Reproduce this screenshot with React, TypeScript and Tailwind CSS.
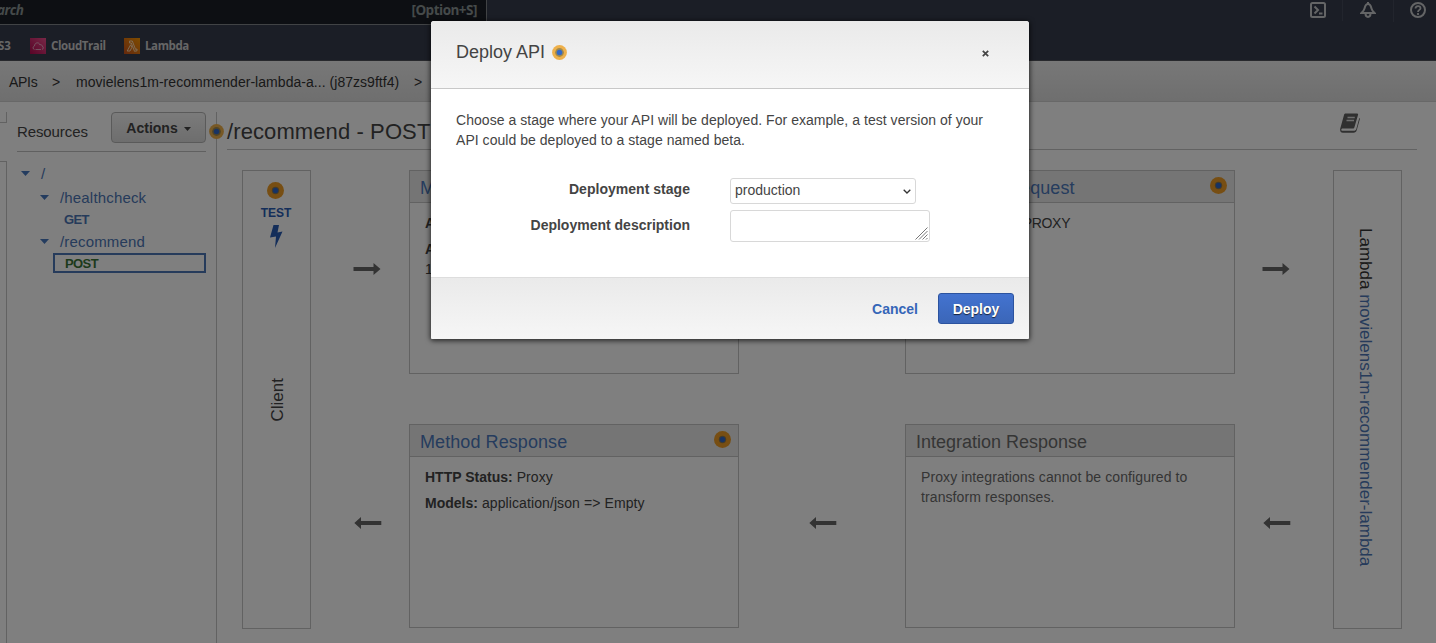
import type { ReactNode } from "react";

function Dot({ className = "" }: { className?: string }) {
  return (
    <svg className={className} width="17" height="17" viewBox="0 0 17 17">
      <circle cx="8.5" cy="8.5" r="8.5" fill="#ee9d26" />
      <circle cx="8.5" cy="8.5" r="3.7" fill="#8c7850" />
      <circle cx="8.5" cy="8.5" r="2.7" fill="#2f66c8" />
    </svg>
  );
}

function SoftDot({ className = "" }: { className?: string }) {
  return (
    <svg className={className} width="15" height="15" viewBox="0 0 15 15">
      <circle cx="7.5" cy="7.5" r="7.4" fill="#eeb04a" />
      <circle cx="7.5" cy="7.5" r="4.4" fill="#a0894f" />
      <circle cx="7.5" cy="7.5" r="2.8" fill="#3369c6" />
    </svg>
  );
}

function Arrow({ left = false, className = "" }: { left?: boolean; className?: string }) {
  return (
    <svg className={`shrink-0 ${className}`} width="28" height="12" viewBox="0 0 28 12">
      <path
        d={left ? "M7 0V4H27.3V8H7V12L0.3 6Z" : "M20.5 0V4H0.5V8H20.5V12L27.5 6Z"}
        fill="#666"
      />
    </svg>
  );
}

function Caret({ className = "" }: { className?: string }) {
  return (
    <svg className={`shrink-0 ${className}`} width="9" height="5" viewBox="0 0 9 5">
      <path d="M0 0H9L4.5 5Z" fill="#4878be" />
    </svg>
  );
}

function Card({
  title,
  link = true,
  dot = true,
  children,
}: {
  title: string;
  link?: boolean;
  dot?: boolean;
  children: ReactNode;
}) {
  return (
    <div className="h-[204px] w-[330px] border border-[#c4c4c4]">
      <div className="flex h-8 items-center justify-between border-b border-[#c4c4c4] bg-[#ebebeb] pr-[7px] pl-2.5">
        <span
          className={`pt-[4px] text-[18px] whitespace-nowrap ${link ? "tracking-[0.08px] text-[#4c79bc]" : "tracking-normal text-[#6a6a6a]"}`}
        >
          {title}
        </span>
        {dot && <Dot className="mb-[3px]" />}
      </div>
      <div className="px-[15px] pt-[10px] text-[14px] leading-5 tracking-[0.1px] text-[#444]">{children}</div>
    </div>
  );
}

function TopBar() {
  return (
    <header className="flex h-[61px] shrink-0 flex-col border-b border-[#50525a] bg-[#363c4c] font-['Open_Sans',sans-serif]">
      <div className="flex h-[25px] shrink-0 justify-between">
        <div className="flex w-[487px] justify-between border-r border-b border-[#82868a] bg-[#1a1f27] pr-[9px] text-[13.500px] leading-[20px] font-bold text-[#8b9494]">
          <span className="-ml-[3px] tracking-[-0.500px] italic">arch</span>
          <span className="tracking-[-0.500px]">[Option+S]</span>
        </div>
        <div className="flex items-start pr-[10px]">
          <svg className="mt-[2px]" width="16" height="16" viewBox="0 0 16 16" fill="none" stroke="#c8cacc" strokeWidth="2">
            <rect x="1" y="1" width="14" height="14" rx="1.5" />
            <path d="M4.5 4.5L8 8L4.5 11.5M9 11.5H12.5" />
          </svg>
          <div className="ml-4 h-[21px] w-px bg-[#454b5b]" />
          <svg className="mt-[2px] ml-[17px]" width="16" height="16" viewBox="0 0 16 16" fill="none" stroke="#c8cacc" strokeWidth="2">
            <path d="M8 0V2M8 2C5.500 2 5 4.500 4.500 6.500C4 8.500 3 9.500 1.500 11H14.500C13 9.500 12 8.500 11.500 6.500C11 4.500 10.500 2 8 2ZM5.500 11.500C5.500 16 10.500 16 10.500 11.500" />
          </svg>
          <div className="ml-[17px] h-[22px] w-px bg-[#454b5b]" />
          <svg className="mt-[2px] ml-4" width="16" height="16" viewBox="0 0 16 16" fill="none" stroke="#c8cacc" strokeWidth="2">
            <circle cx="8" cy="8" r="7" />
            <path d="M5.500 6.500C5.500 3.300 10.500 3.300 10.500 6.200C10.500 8 8 7.800 8 10M8 11V13" strokeWidth="1.800" />
          </svg>
        </div>
      </div>
      <div className="flex h-[35px] items-center pt-[6px] text-[11.500px] font-bold text-[#cdcdcd]">
        <span className="-ml-[2px] w-[32px]">S3</span>
        <svg width="16" height="16" viewBox="0 0 16 16">
          <defs>
            <linearGradient id="trail" x1="0" y1="1" x2="1" y2="0">
              <stop offset="0" stopColor="#b0084d" />
              <stop offset="1" stopColor="#f0508f" />
            </linearGradient>
          </defs>
          <rect width="16" height="16" fill="url(#trail)" />
          <path d="M4.500 11.500C2.600 11.300 2.600 8.400 4.500 8C4.500 4.500 9 3.500 10 7C11 6 12 7 12 8C13.800 8.500 13.600 11.300 12 11.500M5.500 11.500H11" fill="none" stroke="#f0c4d4" strokeWidth="0.800" />
        </svg>
        <span className="ml-[5px] w-[73px] tracking-[-0.400px]">CloudTrail</span>
        <svg width="16" height="16" viewBox="0 0 16 16">
          <defs>
            <linearGradient id="lambda" x1="0" y1="1" x2="1" y2="0">
              <stop offset="0" stopColor="#c8511b" />
              <stop offset="1" stopColor="#f90" />
            </linearGradient>
          </defs>
          <rect width="16" height="16" fill="url(#lambda)" />
          <path d="M5.500 3H8.300L11.500 11.300L13 11V12.800L10.500 13.300L7.300 5H5.500ZM6.600 6.800L7.900 9.300L6 13H3.200Z" fill="none" stroke="#ffe3bd" strokeWidth="0.900" />
        </svg>
        <span className="ml-[5px] tracking-[-0.400px]">Lambda</span>
      </div>
    </header>
  );
}

function Sidebar() {
  return (
    <aside className="flex h-full w-[217px] shrink-0">
      <div className="flex w-[7px] shrink-0 flex-col">
        <div className="mt-[10px] h-[11px] border-r border-b border-[#c4c4c4]" />
        <div className="mt-[38px] flex-1 border-t border-r border-[#c4c4c4]" />
      </div>
      <div className="mt-[10px] flex-1 border-r border-[#c4c4c4] pr-2.5 pl-2.5">
        <div className="flex h-10 justify-between border-b border-[#c0c0c0]">
          <span className="pt-[9px] text-[15px] leading-[22px] tracking-[-0.1px] text-[#444]">Resources</span>
          <button className="flex h-[31px] w-[95px] items-center justify-center gap-[6px] rounded-[4px] border border-[#b4b4b4] bg-gradient-to-b from-[#f6f6f6] to-[#dcdcdc] pt-[2px] text-[14px] font-bold text-[#444]">
            Actions
            <svg width="7" height="4" viewBox="0 0 7 4">
              <path d="M0 0H7L3.500 4Z" fill="#444" />
            </svg>
          </button>
        </div>
        <div className="pt-[11px] text-[15px] leading-[22px] tracking-[0.17px] text-[#4c76b6]">
          <div className="flex h-[22px] items-center pb-px pl-1">
            <Caret />
            <span className="ml-[11px]">/</span>
          </div>
          <div className="mt-[2px] flex h-[22px] items-center pl-[23px]">
            <Caret className="mb-[2px]" />
            <span className="ml-[11px]">/healthcheck</span>
          </div>
          <div className="h-[22px] pl-[47px] text-[13px] font-bold tracking-[-0.600px]">GET</div>
          <div className="flex h-[22px] items-center pl-[23px]">
            <Caret className="mb-[2px]" />
            <span className="ml-[11px]">/recommend</span>
          </div>
          <div className="ml-9 h-5 w-[153px] border-2 border-[#4c76b6] pl-[10px] text-[13px] leading-[17px] font-bold tracking-[-0.6px] text-[#3a7438]">
            POST
          </div>
        </div>
      </div>
    </aside>
  );
}

function MethodView() {
  return (
    <main className="flex-1 pt-[10px] pl-2.5">
      <div className="flex h-[38px] w-[1190px] items-start justify-between border-b border-[#c4c4c4] pr-[57px]">
        <h1 className="pt-[6px] text-[22px] leading-7 tracking-[0.1px] whitespace-nowrap text-[#444]">/recommend - POST</h1>
        <svg className="mt-[1px]" width="20" height="20" viewBox="0 0 20 20">
          <path d="M5.500 0.500H17C18 0.500 18.300 1 18 2L14.500 14C14.200 15 13.800 15.500 12.800 15.500H2.500C1 15.500 0.800 17.800 2.500 17.800H13.500C15.200 17.800 16 17 16.300 16L19.300 5C19.800 5 20 5.500 19.800 6.200L16.800 17C16.300 18.800 15.200 19.800 13.500 19.800H2.800C0.800 19.800 -0.200 18 0.200 15.800L4 2C4.300 1 4.700 0.500 5.500 0.500Z" fill="#606060" />
          <path d="M7.500 4.500H14.800M6.500 7.500H14" stroke="#ddd" strokeWidth="1.300" />
        </svg>
      </div>
      <div className="mt-5 ml-[15px] flex h-[459px]">
        <div className="flex w-[69px] flex-col items-center border border-[#c4c4c4] pt-[11px] pr-[2px]">
          <Dot />
          <span className="mt-[6px] ml-px text-[12px] leading-4 font-bold text-[#285cb4]">TEST</span>
          <svg className="mt-[4px] ml-px" width="13" height="23" viewBox="0 0 13 23">
            <path d="M3.500 0H9L7.500 7.500L12.500 6.500L5 23L6 11.500L0 12.500Z" fill="#285cb4" />
          </svg>
          <span className="mt-[130px] ml-[5px] rotate-180 text-[17px] leading-5 text-[#444] [writing-mode:vertical-rl]">Client</span>
        </div>
        <div className="w-[98px] pl-[42px]">
          <Arrow className="mt-[93px]" />
          <Arrow left className="mt-[242px] ml-px" />
        </div>
        <div className="flex flex-col gap-[50px]">
          <Card title="Method Request">
            <b>Auth:</b> NONE
            <div className="mt-[6px]">
              <b>ARN:</b>
            </div>
            1
          </Card>
          <Card title="Method Response">
            <b className="tracking-normal">HTTP Status:</b> Proxy
            <div className="mt-[6px]">
              <b className="tracking-normal">Models:</b> application/json =&gt; Empty
            </div>
          </Card>
        </div>
        <div className="w-[166px] pl-[70px]">
          <Arrow className="mt-[93px]" />
          <Arrow left className="mt-[242px]" />
        </div>
        <div className="flex flex-col gap-[50px]">
          <Card title="Integration Request">
            <span className="tracking-[-0.3px]">
              <b>Type:</b> LAMBDA_PROXY
            </span>
          </Card>
          <Card title="Integration Response" link={false} dot={false}>
            <span className="text-[#6a6a6a]">Proxy integrations cannot be configured to transform responses.</span>
          </Card>
        </div>
        <div className="w-[98px] pl-[27px]">
          <Arrow className="mt-[93px]" />
          <Arrow left className="mt-[242px] ml-px" />
        </div>
        <div className="w-[69px] border border-[#c4c4c4] pt-[57px] pl-[21px]">
          <div className="text-[17px] leading-5 whitespace-nowrap text-[#333] [writing-mode:vertical-rl]">
            Lambda <span className="text-[#4c76b6]">movielens1m-recommender-lambda</span>
          </div>
        </div>
      </div>
    </main>
  );
}

function DeployDialog() {
  return (
    <section className="flex h-[318px] w-[598px] flex-col rounded-[3px] bg-white text-[#444] shadow-[0_1px_5px_1px_rgba(0,0,0,0.65)]">
      <div className="flex h-[68px] items-center justify-between rounded-t-[3px] border-b border-[#c8c8c8] bg-gradient-to-b from-[#eaeaea] to-[#f6f6f6] pr-[40px] pb-[5px] pl-[25px]">
        <h2 className="flex items-center gap-[7px] text-[18px]">
          Deploy API
          <SoftDot />
        </h2>
        <svg className="mt-[3px]" width="7" height="7" viewBox="0 0 7 7">
          <path d="M0.800 0.800L6.200 6.200M6.200 0.800L0.800 6.200" stroke="#444" strokeWidth="1.700" />
        </svg>
      </div>
      <div className="flex-1 px-[25px] pt-[21px] text-[14px] leading-5">
        <p className="w-[545px] tracking-[0.04px]">
          Choose a stage where your API will be deployed. For example, a test version of your API could be deployed to a stage named beta.
        </p>
        <div className="mt-7 flex h-[26px]">
          <span className="w-[234px] pt-px text-right font-bold tracking-[0.03px]">Deployment stage</span>
          <div className="ml-10 flex w-[186px] items-center justify-between rounded-[3px] border border-[#d8d8d8] pr-1 pb-[2px] pl-1">
            production
            <svg className="mt-[3px]" width="8" height="5" viewBox="0 0 8 5">
              <path d="M0.700 0.700L4 4L7.300 0.700" fill="none" stroke="#333" strokeWidth="1.300" />
            </svg>
          </div>
        </div>
        <div className="mt-[6px] flex h-8">
          <span className="w-[234px] pt-[5px] text-right font-bold">Deployment description</span>
          <div className="ml-10 flex w-[200px] items-end justify-end rounded-[3px] border border-[#d8d8d8] p-px">
            <svg width="13" height="13" viewBox="0 0 13 13">
              <path d="M0.500 12.500L12.500 0.500M4 12.500L12.500 4M7.500 12.500L12.500 7.500M11 12.500L12.500 11" stroke="#777" strokeWidth="1" />
            </svg>
          </div>
        </div>
      </div>
      <div className="flex h-[62px] items-center justify-end gap-5 rounded-b-[1px] border-t border-[#ddd] bg-gradient-to-b from-[#eaeaea] to-[#f6f6f6] pr-[15px] text-[14px] font-bold">
        <span className="pt-[2px] text-[#3566b8]">Cancel</span>
        <button className="h-[31px] w-[76px] rounded-[3px] border border-[#2c539f] bg-gradient-to-b from-[#4373d0] to-[#3b66b8] pt-px text-white [text-shadow:0_1px_1px_rgba(0,0,0,0.7)]">
          Deploy
        </button>
      </div>
    </section>
  );
}

export default function App() {
  return (
    <div className="relative h-[643px] w-[1436px] overflow-hidden bg-white font-['Liberation_Sans',Arial,sans-serif]">
      <div className="flex h-full flex-col">
        <TopBar />
        <nav className="flex h-[41px] shrink-0 items-center border-b border-[#d0d0d0] bg-gradient-to-b from-[#f0f0f0] to-[#dedede] pt-[2px] pl-[9px] text-[14px] whitespace-nowrap text-[#333]">
          <span className="w-[43px] tracking-[-0.3px]">APIs</span>
          <span className="w-6">&gt;</span>
          <span className="w-[338px] tracking-[0.04px]">movielens1m-recommender-lambda-a... (j87zs9ftf4)</span>
          <span>&gt;</span>
        </nav>
        <div className="relative flex flex-1">
          <Sidebar />
          <MethodView />
          <SoftDot className="absolute top-[22px] left-[209px]" />
        </div>
      </div>
      <div className="absolute inset-0 flex items-start bg-black/50 pt-[21px] pl-[431px]">
        <DeployDialog />
      </div>
    </div>
  );
}
